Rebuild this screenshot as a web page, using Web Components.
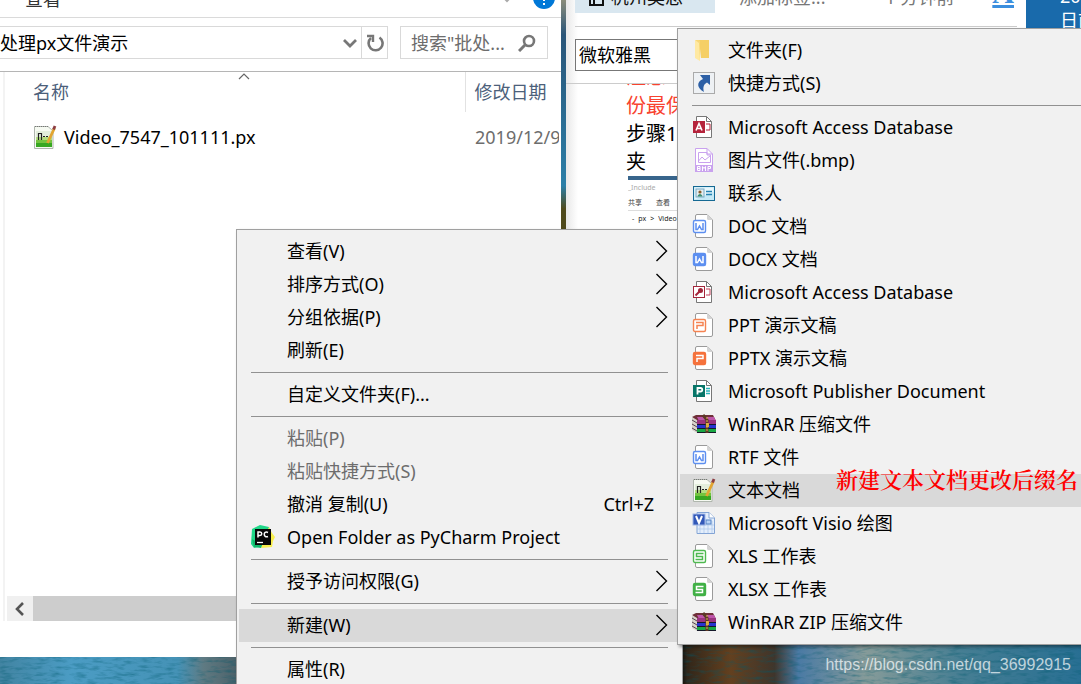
<!DOCTYPE html>
<html lang="zh-CN">
<head>
<meta charset="utf-8">
<title>新建文本文档</title>
<style>
  body {
    margin: 0;
    font: 18px/24px "Noto Sans", "Noto Sans CJK SC", sans-serif;
    color: #000;
  }
</style>
</head>
<body>
<desk-top>
  <explorer-window slot="window"></explorer-window>
  <note-window slot="window"></note-window>
  <context-menu slot="menu" class="main" label="文件夹菜单">
    <menu-item arrow>查看(V)</menu-item>
    <menu-item arrow>排序方式(O)</menu-item>
    <menu-item arrow>分组依据(P)</menu-item>
    <menu-item>刷新(E)</menu-item>
    <menu-line></menu-line>
    <menu-item>自定义文件夹(F)...</menu-item>
    <menu-line></menu-line>
    <menu-item disabled>粘贴(P)</menu-item>
    <menu-item disabled>粘贴快捷方式(S)</menu-item>
    <menu-item shortcut="Ctrl+Z">撤消 复制(U)</menu-item>
    <menu-item icon="pycharm">Open Folder as PyCharm Project</menu-item>
    <menu-line></menu-line>
    <menu-item arrow>授予访问权限(G)</menu-item>
    <menu-line></menu-line>
    <menu-item arrow active>新建(W)</menu-item>
    <menu-line></menu-line>
    <menu-item>属性(R)</menu-item>
  </context-menu>
  <context-menu slot="menu" class="sub" label="新建">
    <menu-item icon="folder">文件夹(F)</menu-item>
    <menu-item icon="shortcut">快捷方式(S)</menu-item>
    <menu-line></menu-line>
    <menu-item icon="access">Microsoft Access Database</menu-item>
    <menu-item icon="bmp">图片文件(.bmp)</menu-item>
    <menu-item icon="contact">联系人</menu-item>
    <menu-item icon="doc">DOC 文档</menu-item>
    <menu-item icon="docx">DOCX 文档</menu-item>
    <menu-item icon="accesskey">Microsoft Access Database</menu-item>
    <menu-item icon="ppt">PPT 演示文稿</menu-item>
    <menu-item icon="pptx">PPTX 演示文稿</menu-item>
    <menu-item icon="publisher">Microsoft Publisher Document</menu-item>
    <menu-item icon="rar">WinRAR 压缩文件</menu-item>
    <menu-item icon="doc">RTF 文件</menu-item>
    <menu-item icon="text" active>文本文档</menu-item>
    <menu-item icon="visio">Microsoft Visio 绘图</menu-item>
    <menu-item icon="xls">XLS 工作表</menu-item>
    <menu-item icon="xlsx">XLSX 工作表</menu-item>
    <menu-item icon="rar">WinRAR ZIP 压缩文件</menu-item>
  </context-menu>
  <span slot="note">新建文本文档更改后缀名</span>
  <span slot="watermark">https://blog.csdn.net/qq_36992915</span>
</desk-top>

<script>
// blank sheets shared by the document icons
const sheet = `
  <path d="M5 .5H15L20.500 6V22A1.500 1.500 0 0 1 19 23.500H5A1.500 1.500 0 0 1 3.500 22V2A1.500 1.500 0 0 1 5 .5Z" fill="#fff" stroke="#9a9a9a"/>
  <path d="M15 .5L20.500 6H16.500A1.500 1.500 0 0 1 15 4.500Z" fill="#d4d4d4"/>`
const office = `
  <path d="M4.500 1.500H14.500L19.500 6.500V22.500H4.500Z" fill="#fff" stroke="#777"/>
  <path d="M14.500 1.500V6.500H19.500" fill="none" stroke="#777"/>`
const wps = (color, glyph, solid) => sheet + `
  <rect x="1.500" y="6.500" width="12" height="12" rx="1.500" fill="${solid ? color : '#fff'}" stroke="${color}" stroke-width="1.400"/>
  <path d="${glyph}" fill="none" stroke="${solid ? '#fff' : color}" stroke-width="1.500"/>`
const W = 'M4 9V15.500H5.500L7.500 12L9.500 15.500H11V9'
const P = 'M4 9.500H11V12.500H5V16'
const S = 'M11.500 9.500H4.500V12.500H10.500V15.500H3.500'

const icons = {
  folder: `<path d="M7 2H17V20H9Z" fill="#f5cf66"/><path d="M3 2L8 5V23L3 20Z" fill="#ffe9a2"/><path d="M3 2H7L8 5V23L7 5Z" fill="#f8d775"/>`,
  shortcut: `<rect x="1.500" y="1.500" width="21" height="21" fill="#eef1f4" stroke="#aaa"/>
    <path d="M8 4H18V14L15 11.500C12 13 10.500 16 12 21C5 17 4 11 11 8Z" fill="#2c5fa5"/>`,
  access: office + `<path d="M14 9H18V15H14" fill="none" stroke="#b5233b"/><rect x="1" y="6" width="12" height="12" fill="#b5233b"/>
    <path d="M4 15.500L7 8.500L10 15.500M5 13.500H9" fill="none" stroke="#fff" stroke-width="1.600"/>`,
  accesskey: office + `<path d="M14 9H18V15H14" fill="none" stroke="#c4405a"/><rect x="1.500" y="6.500" width="11" height="11" fill="#fff" stroke="#a4273c"/>
    <path d="M3.500 15.500L8 11" stroke="#a4273c" stroke-width="2"/><circle cx="8.500" cy="10.500" r="2.500" fill="#a4273c"/>`,
  bmp: `<path d="M3.500 .5H15L20.500 6V23.500H3.500Z" fill="#fff" stroke="#c9a2ee"/><path d="M15 .5V6H20.500" fill="none" stroke="#c9a2ee"/>
    <path d="M6.500 4.500H15V7H18.500V14.500H6.500ZM6.500 13L10 9L13 12L18 8" fill="none" stroke="#c9a2ee"/><rect x="3" y="17" width="18" height="7" fill="#c9a2ee"/>
    <path d="M5.500 22.500V18.500H8V22.500H5.500M5.500 20.500H8M10.500 23V18.500L12 20.500L13.500 18.500V23M16 23V18.500H18.500V20.500H16" fill="none" stroke="#fff"/>`,
  contact: `<rect x="1.500" y="5.500" width="21" height="14" fill="#c5e9f6" stroke="#156993"/><path d="M2.500 6.500H21.500V11L2.500 18.500Z" fill="#e8f7fc"/>
    <rect x="4" y="8" width="8" height="8" fill="#e3edf0" stroke="#77a9c6"/><circle cx="8" cy="11" r="1.600" fill="#8a5d2c"/><path d="M5.500 15.500C6 12 10 12 10.500 15.500Z" fill="#3e8e72"/>
    <path d="M14 10.500H20M14 13.500H20" stroke="#2582b2" stroke-width="1.400"/>`,
  doc: wps('#5d8ff0', W, false),
  docx: wps('#5d8ff0', W, true),
  ppt: wps('#f58352', P, false),
  pptx: wps('#f5723c', P, true),
  xls: wps('#4fb950', S, false),
  xlsx: wps('#41b146', S, true),
  publisher: office + `<path d="M14 9.500H18M14 12H18M14 14.500H18" stroke="#29b3b9" stroke-width="1.600"/><rect x="1" y="6" width="12" height="12" fill="#077568"/>
    <path d="M5.500 15.500V9H8.500A1.500 1.500 0 0 1 8.500 12.500H5.500" fill="none" stroke="#fff" stroke-width="1.800"/>`,
  rar: `<path d="M4 3H21L24 9H4L0 5Z" fill="#6e3038"/><path d="M5 5H22L24 9H7Z" fill="#bd55a9"/><path d="M0 5L5 8V21L0 18Z" fill="#d8d3ca"/>
    <path d="M0 8L5 11M0 12L5 15M0 16L5 19" stroke="#554550"/>
    <path d="M5 8H24V12H5Z" fill="#9a337f"/><path d="M5 12H24V16H5Z" fill="#2734cf"/><path d="M5 16H24V20H5Z" fill="#19a843"/>
    <path d="M5 12.500H24M5 16.500H24M5 20.500H24" stroke="#15182a"/><path d="M11 3L15 8V21" fill="none" stroke="#5b3925" stroke-width="3"/>
    <rect x="14" y="11" width="3" height="4" fill="#d8a939"/><path d="M15 5V20" stroke="#e2b851" stroke-width="1" stroke-dasharray="2 1"/>`,
  text: `<path d="M1.500 1.500H15L20 6V23.500H1.500Z" fill="#f6faf2" stroke="#afb6ad"/><path d="M2 1.500H15" stroke="#777" stroke-dasharray="1 1"/>
    <path d="M3 6H19V22H3Z" fill="#e3eedc"/><path d="M3 12H19V22H3Z" fill="#b4de80"/><path d="M3 15H19V22H3Z" fill="#74c43f"/><path d="M3 18H19V22H3Z" fill="#38a722"/>
    <path d="M5.500 8V15M8.500 8V15M5 8.500H9M10 11.500H12M13 11.500H15" stroke="#222" stroke-width="1.200"/>
    <path d="M14.500 18L21.500 3" stroke="#e2a531" stroke-width="2.800"/><path d="M20.500 4.500L22 1" stroke="#8c3e43" stroke-width="2.800"/>`,
  visio: `<path d="M5 1.500H17L22.500 7V22.500H5Z" fill="#e4eefb" stroke="#83a4d5"/><path d="M17 1.500V7H22.500" fill="#fff" stroke="#83a4d5"/>
    <path d="M8 10V22M12 10V22M16 10V22M20 10V22M5 14H22M5 18H22" stroke="#a9c4eb" stroke-width=".7"/><rect x="14" y="9" width="5" height="4" fill="#b7d2f5" stroke="#5583c5"/>
    <rect x="1" y="3" width="12" height="11" fill="#3258b8" stroke="#9db4e5"/>
    <path d="M4 5L7 12L10 5" fill="none" stroke="#fff" stroke-width="2"/>`,
  pycharm: `<path d="M1 4L9 0L18 2L20 12L12 21L3 23L0 19Z" fill="#21d789"/><path d="M18 2L21 8L24 12L22 16L21 22L10 23L15 8Z" fill="#f8ef4d"/>
    <path d="M1 14L11 20L10 23L3 22Z" fill="#12b86a"/><rect x="4" y="4" width="16" height="16" fill="#080808"/>
    <path d="M7 12.500V7H9A1.500 1.500 0 0 1 9 10.500H7M17 7.500C12 5 12 13.500 17 11.500" fill="none" stroke="#fff" stroke-width="1.500"/><path d="M6 17.500H12" stroke="#fff" stroke-width="1.300"/>`
}

class FileIcon extends HTMLElement {
  connectedCallback() {
    this.attachShadow({ mode: 'open' }).innerHTML = `
    <style>
      :host { display: block; flex: none; width: 24px; height: 24px; }
      svg { display: block; overflow: visible; }
    </style>
    <svg width="24" height="24" viewBox="0 0 24 24" aria-hidden="true">${icons[this.getAttribute('name')] || ''}</svg>`
  }
}

class MenuLine extends HTMLElement {
  constructor() {
    super()
    this.attachShadow({ mode: 'open' }).innerHTML = `
    <style>
      :host { display: block; padding: 5px 12px; }
      div { height: 1px; background: #919191; }
    </style>
    <div role="separator"></div>`
  }
}

class MenuItem extends HTMLElement {
  connectedCallback() {
    const arrow = this.hasAttribute('arrow')
      ? '<svg width="14" height="22" viewBox="0 0 14 22" aria-hidden="true"><path d="M2.500 1L12.500 11L2.500 21" fill="none" stroke="#000" stroke-width="1.400"/></svg>'
      : ''
    const key = this.getAttribute('shortcut')
    this.attachShadow({ mode: 'open' }).innerHTML = `
    <style>
      :host { display: block; }
      button {
        display: flex;
        align-items: center;
        gap: 12px;
        width: 100%;
        height: 33px;
        padding: 0 12px 2px;
        border: 0;
        background: none;
        color: inherit;
        font: inherit;
        text-align: left;
        white-space: nowrap;
      }
      button:hover, :host([active]) button { background: #d9d9d9; }
      button:disabled { color: #6d6d6d; background: none; }
      .label { flex: 1; }
      kbd { font: inherit; padding-right: 14px; }
    </style>
    <button role="menuitem" ${this.hasAttribute('disabled') ? 'disabled' : ''}>
      <file-icon name="${this.getAttribute('icon') || ''}"></file-icon>
      <span class="label"><slot></slot></span>
      ${key ? `<kbd>${key}</kbd>` : ''}${arrow}
    </button>`
  }
}

class ContextMenu extends HTMLElement {
  connectedCallback() {
    this.attachShadow({ mode: 'open' }).innerHTML = `
    <style>
      :host { display: block; }
      div {
        border: 1px solid #a0a0a0;
        padding: 5px 2px;
        background: #f1f1f1;
        box-shadow: 2px 2px 3px rgba(0,0,0,.4);
      }
    </style>
    <div role="menu" aria-label="${this.getAttribute('label')}"><slot></slot></div>`
  }
}

class ExplorerWindow extends HTMLElement {
  constructor() {
    super()
    this.attachShadow({ mode: 'open' }).innerHTML = `
    <style>
      :host { display: flex; flex-direction: column; background: #fff; overflow: hidden; }
      button { display: grid; place-items: center; padding: 0; border: 0; background: none; font: inherit; }
      .ribbon {
        display: flex; align-items: flex-end; gap: 20px;
        height: 17px; padding: 0 6px 0 25px;
        border-bottom: 1px solid #dadada;
      }
      .ribbon .tab { margin-right: auto; height: 36px; color: #333; }
      .ribbon .fold { height: 34px; }
      .ribbon .help { width: 22px; height: 38px; }
      .bar { display: flex; gap: 12px; padding: 8px 13px 12px 0; border-bottom: 1px solid #b5b5b5; }
      .address, .search { display: flex; border: 1px solid #d9d9d9; height: 31px; }
      .address { flex: 1; border-left: 0; }
      input { flex: 1; min-width: 0; border: 0; padding: 0; font: inherit; color: #000; background: none; outline: 0; }
      .address button { width: 26px; }
      .address .reload { border-left: 1px solid #d9d9d9; }
      .search { width: 146px; }
      .search input { padding-left: 10px; }
      .search input::placeholder { color: #6d6d6d; opacity: 1; }
      .search button { width: 40px; }
      .body { flex: 1; display: flex; margin-right: 2px; }
      .tree { width: 3px; border-right: 2px solid #f3f3f3; background: #fff; }
      main { flex: 1; min-width: 0; display: flex; flex-direction: column; padding-left: 2px; }
      table { width: 100%; border-collapse: collapse; table-layout: fixed; }
      th { height: 40px; padding: 0 10px 0 26px; font-weight: 400; color: #4c607a; text-align: left; }
      th + th { border-left: 1px solid #e2e2e2; padding: 0 0 0 9px; }
      td { height: 50px; padding: 0 0 0 26px; white-space: nowrap; overflow: hidden; }
      td + td { padding-left: 10px; color: #6d6d6d; }
      .head { display: grid; grid-template-columns: 1fr auto 1fr; height: 40px; line-height: 40px; }
      .file { display: flex; align-items: center; gap: 7px; }
      .scroll { display: flex; margin-top: auto; height: 25px; background: #cdcdcd; }
      .scroll button { width: 26px; background: #f0f0f0; }
      footer { height: 36px; }
    </style>
    <div class="ribbon">
      <button class="tab">查看</button>
      <button class="fold" aria-label="折叠功能区"><svg width="12" height="8" viewBox="0 0 12 8"><path d="M2 1L6 5L10 1" fill="none" stroke="#aaa" stroke-width="2"/></svg></button>
      <button class="help" aria-label="帮助"><svg width="22" height="22" viewBox="0 0 22 22"><circle cx="11" cy="11" r="11" fill="#0078d7"/><path d="M11 8V14M11 16V18" stroke="#fff" stroke-width="2"/></svg></button>
    </div>
    <div class="bar">
      <div class="address">
        <input aria-label="地址" value="处理px文件演示">
        <button aria-label="历史"><svg width="18" height="10" viewBox="0 0 18 10"><path d="M5 2L11 8L17 2" fill="none" stroke="#777" stroke-width="2.800"/></svg></button>
        <button class="reload" aria-label="刷新"><svg width="18" height="18" viewBox="0 0 18 18"><path d="M13.500 3.500A7 7 0 1 1 5 4" fill="none" stroke="#777" stroke-width="2.600"/><path d="M1 2H7V8" fill="none" stroke="#777" stroke-width="2.400"/></svg></button>
      </div>
      <div class="search">
        <input aria-label="搜索" placeholder="搜索&quot;批处...">
        <button aria-label="开始搜索"><svg width="18" height="18" viewBox="0 0 18 18"><circle cx="11" cy="7" r="5" fill="none" stroke="#777" stroke-width="2.600"/><path d="M7.500 10.500L1 17" stroke="#777" stroke-width="3"/></svg></button>
      </div>
    </div>
    <div class="body">
      <div class="tree"></div>
      <main>
        <table>
          <colgroup><col><col style="width:94px"></colgroup>
          <thead><tr>
            <th><div class="head">名称<svg width="12" height="8" viewBox="0 0 12 8"><path d="M1 7L6 2L11 7" fill="none" stroke="#666" stroke-width="1.200"/></svg></div></th>
            <th>修改日期</th>
          </tr></thead>
          <tbody><tr>
            <td><div class="file"><file-icon name="text"></file-icon>Video_7547_101111.px</div></td>
            <td>2019/12/9</td>
          </tr></tbody>
        </table>
        <div class="scroll"><button aria-label="向左滚动"><svg width="10" height="14" viewBox="0 0 10 14"><path d="M8 1L2 7L8 13" fill="none" stroke="#555" stroke-width="2.600"/></svg></button></div>
      </main>
    </div>
    <footer></footer>`
  }
}

class NoteWindow extends HTMLElement {
  constructor() {
    super()
    this.attachShadow({ mode: 'open' }).innerHTML = `
    <style>
      :host { display: block; background: linear-gradient(90deg, #e8e8e8, #fff 12px); overflow: hidden; border-bottom: 1px solid #999; box-sizing: border-box; }
      button { padding: 0; border: 0; background: none; font: inherit; color: inherit; }
      .top {
        display: flex; align-items: flex-end; height: 13px; padding-bottom: 13px;
        margin: 0 9px; border-bottom: 1px solid #ccc; color: #777;
      }
      .top > * { height: 31px; line-height: 31px; white-space: nowrap; }
      .book { display: flex; align-items: center; gap: 6px; width: 140px; padding-left: 14px; color: #111; background: #d9e7f0; }
      .tags { margin-left: 24px; }
      .time { margin: 0 38px 0 auto; }
      .top .font { height: 40px; padding-right: 3px; color: #3b8ede; font: bold 30px/30px "Liberation Serif", serif; text-decoration: underline; }
      .bar { padding: 12px 9px; border-bottom: 1px solid #ccc; }
      select { appearance: none; display: block; width: 200px; height: 32px; padding: 0 3px; border: 1px solid #777; background: #fff; font: inherit; color: #000; }
      article { margin-left: 60px; width: 260px; font-size: 20px; line-height: 28px; white-space: nowrap; }
      p { margin: 0; }
      .red { color: #f8432f; }
      .clip { height: 36px; overflow: hidden; display: flex; flex-direction: column; justify-content: flex-end; gap: 1px; }
      .shot { margin-left: 2px; color: #444; font-size: 7px; line-height: 15px; height: 52px; overflow: hidden; }
      .shot i { display: block; height: 4px; background: #38658c; }
      .shot div { display: flex; gap: 14px; }
      .shot .path { gap: 4px; padding-left: 4px; color: #222; border-top: 1px solid #ddd; }
      .shot .inc { color: #aaa; }
      .shot svg { align-self: flex-end; }
    </style>
    <div class="top">
      <button class="book"><svg width="16" height="18" viewBox="0 0 16 18"><path d="M1 1H14V16H1ZM5 1V16" fill="none" stroke="#111" stroke-width="2"/></svg>杭州奥思</button>
      <button class="tags">添加标签...</button>
      <span class="time">1 分钟前</span>
      <button class="font">A</button>
    </div>
    <div class="bar"><select aria-label="字体"><option>微软雅黑</option></select></div>
    <article>
      <div class="clip red"><p>注意:</p><p>份最保险</p></div>
      <p>步骤1</p>
      <p>夹</p>
      <div class="shot"><i></i><div class="inc">_Include</div><div><span>共享</span><span>查看</span><svg width="30" height="8" viewBox="14 0 30 8"><path d="M3 8L24 -6V8Z" fill="#e8211c"/></svg></div><div class="path"><span>-</span><span>px</span><span>&gt;</span><span>Video</span></div></div>
    </article>`
  }
}

class DeskTop extends HTMLElement {
  constructor() {
    super()
    this.attachShadow({ mode: 'open' }).innerHTML = `
    <style>
      :host { display: block; position: relative; height: 100vh; overflow: hidden; background: #2f7799; }
      .scene { display: block; width: 100%; height: 100%; }
      ::slotted(*) { position: absolute; }
      ::slotted(explorer-window) { left: 0; top: 0; width: 561px; height: 657px; }
      ::slotted(note-window) { left: 566px; top: 0; width: 460px; height: 230px; }
      ::slotted(.main) { left: 236px; top: 229px; width: 447px; }
      ::slotted(.sub) { left: 677px; top: 28px; right: -16px; }
      .date { position: absolute; left: 1060px; top: -16px; color: #fff; white-space: nowrap; }
      ::slotted([slot=note]) {
        left: 836px; top: 467px; white-space: nowrap;
        font: 600 22px/24px "Noto Serif CJK SC", "Liberation Serif", "Noto Sans CJK SC", serif; color: #f00;
      }
      ::slotted([slot=watermark]) {
        right: 10px; bottom: 7px;
        font: 16px/24px "Liberation Sans", sans-serif; color: rgba(255,255,255,.7);
      }
    </style>
    <svg class="scene" viewBox="0 0 1081 684" preserveAspectRatio="none" aria-hidden="true">
      <defs>
        <linearGradient id="side" x2="0" y2="1"><stop stop-color="#8a8c7a"/><stop offset=".15" stop-color="#2a5578"/><stop offset=".8" stop-color="#2b7fa8"/><stop offset=".9" stop-color="#4f4a1c"/></linearGradient>
        <linearGradient id="left"><stop stop-color="#4284a2"/><stop offset=".3" stop-color="#4b9cc4"/><stop offset=".75" stop-color="#4592b6"/><stop offset=".86" stop-color="#5f7a82"/><stop offset="1" stop-color="#4c6169"/></linearGradient>
        <linearGradient id="right"><stop stop-color="#2d2419"/><stop offset=".12" stop-color="#63401f"/><stop offset=".23" stop-color="#3f352b"/><stop offset=".29" stop-color="#4a7aa4"/><stop offset=".46" stop-color="#869b99"/><stop offset=".7" stop-color="#467e93"/><stop offset="1" stop-color="#286f93"/></linearGradient>
        <filter id="grain" x="0" y="0" width="1" height="1"><feTurbulence type="fractalNoise" baseFrequency=".08 .3" numOctaves="3"/><feColorMatrix values="0 0 0 0 0  0 0 0 0 .1  0 0 0 0 .15  0 1 0 0 -.45"/></filter>
      </defs>
      <rect x="560" width="7" height="232" fill="url(#side)"/>
      <rect x="1026" width="55" height="30" fill="#196aab"/>
      <rect y="656" width="237" height="28" fill="url(#left)"/>
      <rect x="683" y="644" width="398" height="40" fill="url(#right)"/>
      <rect y="644" width="1081" height="40" filter="url(#grain)"/>
    </svg>
    <slot name="window"></slot>
    <span class="date">2019<br>日前</span>
    <slot name="menu"></slot>
    <slot name="note"></slot>
    <slot name="watermark"></slot>`
  }
}

customElements.define('file-icon', FileIcon)
customElements.define('menu-line', MenuLine)
customElements.define('menu-item', MenuItem)
customElements.define('context-menu', ContextMenu)
customElements.define('explorer-window', ExplorerWindow)
customElements.define('note-window', NoteWindow)
customElements.define('desk-top', DeskTop)
</script>
</body>
</html>
